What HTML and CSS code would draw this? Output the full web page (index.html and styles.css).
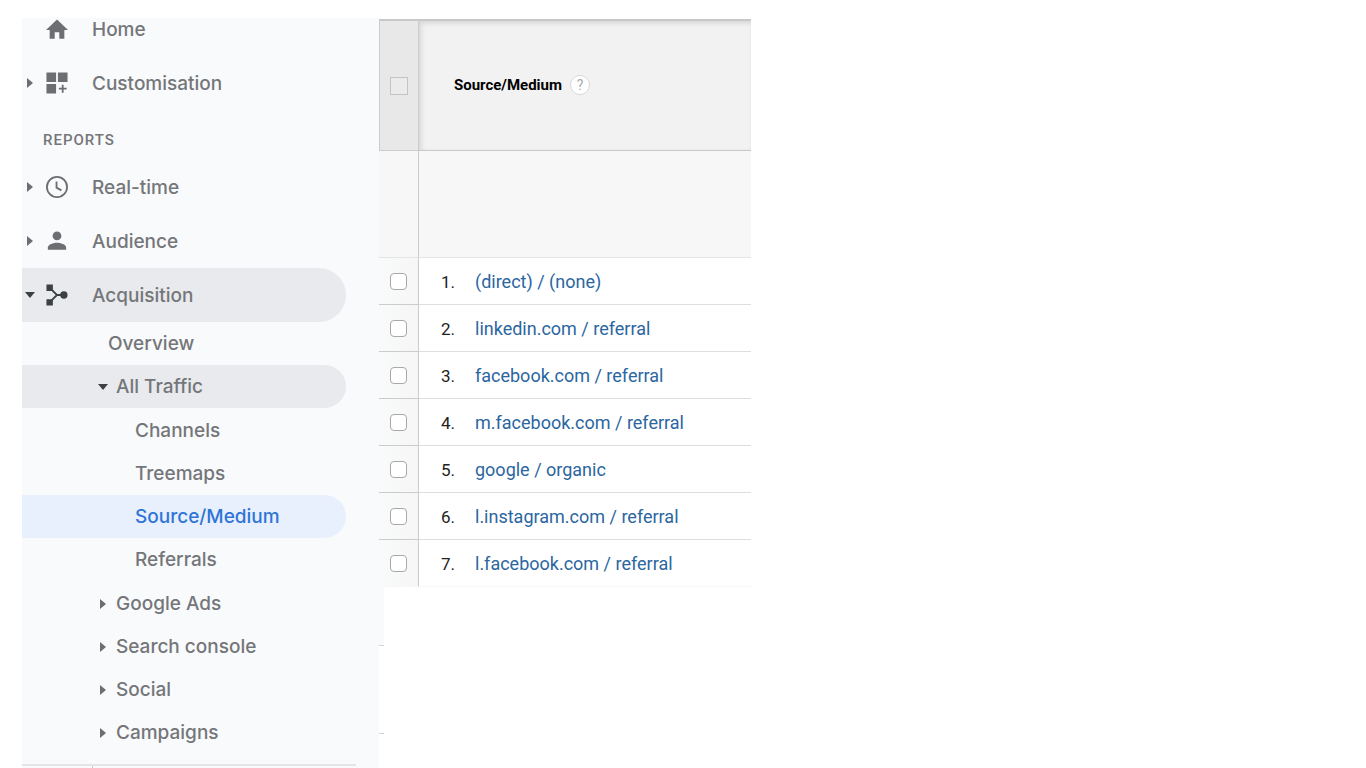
FILE: index.html
```
<!DOCTYPE html>
<html lang="en">
<head>
  <meta charset="UTF-8">
  <meta name="viewport" content="width=device-width, initial-scale=1.0">
  <title>Source/Medium</title>
  <link rel="stylesheet" href="styles.css">
</head>
<body>
  <div class="page">
    <aside class="sidebar">
      <nav>
        <ul class="nav">
          <li><a class="item" href="#"><span class="arrow"></span>
            <svg class="icon" viewBox="0 0 24 24"><path d="M9.500 22.500v-7h5v7h5.500V13h4L12 1.500 0 13h4v9.500z"/></svg>Home</a></li>
          <li><a class="item" href="#"><span class="arrow right"></span>
            <svg class="icon" viewBox="0 0 24 24"><path d="M.5.5h10.500v10.500H.5zM13 .5h10.500v10.500H13zM.5 13h10.500v10.500H.5zM17.200 14h2v3.200h3.300v2h-3.300v3.300h-2v-3.300H14v-2h3.200z"/></svg>Customisation</a></li>
        </ul>
        <h2 class="heading">REPORTS</h2>
        <ul class="nav">
          <li><a class="item" href="#"><span class="arrow right"></span>
            <svg class="icon" viewBox="0 0 24 24"><circle class="line" cx="12" cy="12" r="11"/><path class="line" d="M11.500 6v6.700l5.300 3"/></svg>Real-time</a></li>
          <li><a class="item" href="#"><span class="arrow right"></span>
            <svg class="icon" viewBox="0 0 24 24"><circle cx="12" cy="6.500" r="4.800"/><path d="M2 21.500v-2.500c0-3.500 6.500-5.200 10-5.200s10 1.700 10 5.200v2.500z"/></svg>Audience</a></li>
          <li><a class="item open" href="#"><span class="arrow down"></span>
            <svg class="icon dark" viewBox="0 0 24 24"><path d="M.5.5h7V7.500h-7zM.5 16.500h7v7h-7z"/><circle cx="19.500" cy="12" r="4"/><path class="line" d="M4.500 4.500l7.500 7.500-7.500 7.500M12 12h7"/></svg>Acquisition</a>
            <ul class="sub">
              <li><a class="item overview" href="#">Overview</a></li>
              <li><a class="item group open" href="#"><span class="arrow down"></span>All Traffic</a>
                <ul class="leaves">
                  <li><a class="item" href="#">Channels</a></li>
                  <li><a class="item" href="#">Treemaps</a></li>
                  <li><a class="item active" href="#">Source/Medium</a></li>
                  <li><a class="item" href="#">Referrals</a></li>
                </ul>
              </li>
              <li><a class="item group" href="#"><span class="arrow right"></span>Google Ads</a></li>
              <li><a class="item group" href="#"><span class="arrow right"></span>Search console</a></li>
              <li><a class="item group" href="#"><span class="arrow right"></span>Social</a></li>
              <li><a class="item group" href="#"><span class="arrow right"></span>Campaigns</a></li>
            </ul>
          </li>
        </ul>
      </nav>
      <div class="bottom-bar"><div class="bottom-cell"></div></div>
    </aside>

    <main class="report">
      <table class="table">
        <thead>
          <tr>
            <th class="check"><input class="box square" type="checkbox" aria-label="Select all rows"></th>
            <th class="title"><div class="title-row">Source/Medium <button class="help" type="button">?</button></div></th>
          </tr>
        </thead>
        <tbody>
          <tr class="totals"><td class="check"></td><td></td></tr>
          <tr><td class="check"><input class="box" type="checkbox" aria-label="Row 1"></td><td><span class="num">1.</span><a href="#">(direct) / (none)</a></td></tr>
          <tr><td class="check"><input class="box" type="checkbox" aria-label="Row 2"></td><td><span class="num">2.</span><a href="#">linkedin.com / referral</a></td></tr>
          <tr><td class="check"><input class="box" type="checkbox" aria-label="Row 3"></td><td><span class="num">3.</span><a href="#">facebook.com / referral</a></td></tr>
          <tr><td class="check"><input class="box" type="checkbox" aria-label="Row 4"></td><td><span class="num">4.</span><a href="#">m.facebook.com / referral</a></td></tr>
          <tr><td class="check"><input class="box" type="checkbox" aria-label="Row 5"></td><td><span class="num">5.</span><a href="#">google / organic</a></td></tr>
          <tr><td class="check"><input class="box" type="checkbox" aria-label="Row 6"></td><td><span class="num">6.</span><a href="#">l.instagram.com / referral</a></td></tr>
          <tr><td class="check"><input class="box" type="checkbox" aria-label="Row 7"></td><td><span class="num">7.</span><a href="#">l.facebook.com / referral</a></td></tr>
        </tbody>
      </table>
      <div class="edge filled"></div>
      <div class="edge tall"></div>
    </main>
  </div>
</body>
</html>
```
FILE: styles.css
```
* {
  box-sizing: border-box;
}

body {
  margin: 0;
  background: #fff;
  font-family: Roboto, "Liberation Sans", sans-serif;
}

.page {
  display: flex;
  height: 100vh;
  padding: 18px 0 0 22px;
  overflow: hidden;
}

ul {
  list-style: none;
  margin: 0;
  padding: 0;
}

a {
  color: #2b66a0;
  text-decoration: none;
}

/* sidebar */
.sidebar {
  flex: 0 0 357px;
  overflow: hidden;
  background: #f9fafc;
  font-family: Inter, sans-serif;
}

nav {
  margin-top: -16px;
}

.item {
  display: flex;
  align-items: center;
  height: 54px;
  margin-right: 33px;
  border-radius: 0 27px 27px 0;
  color: #747679;
  font-size: 19px;
  font-weight: 500;
}

.open {
  background: #e8eaed;
}

.arrow {
  display: flex;
  justify-content: center;
  width: 16px;
  margin-right: 8px;
}

.arrow::before {
  content: "";
  border: 0 solid transparent;
}

.right::before {
  border-width: 5px 0 5px 6px;
  border-left-color: #6c6e71;
}

.down::before {
  border-width: 6px 5px 0;
  border-top-color: #3c4043;
}

.icon {
  width: 22px;
  height: 22px;
  margin-right: 24px;
  fill: #6c6e71;
  stroke: #6c6e71;
  stroke-width: 0;
}

.icon .line {
  fill: none;
  stroke-width: 2;
}

.dark {
  fill: #3c4043;
  stroke: #3c4043;
}

.heading {
  margin: 0;
  padding: 21px 0 11px 21px;
  color: #747679;
  font-family: Roboto, sans-serif;
  font-size: 15px;
  font-weight: 500;
  line-height: 18px;
  letter-spacing: 1px;
}

.sub {
  padding-bottom: 10px;
}

.sub .item {
  height: 43px;
}

.overview {
  padding-left: 86px;
}

.group {
  padding-left: 73px;
}

.group .arrow {
  margin-right: 5px;
}

.leaves {
  padding: 1px 0;
}

.leaves .item {
  padding-left: 113px;
}

.leaves .active {
  background: #e8f0fe;
  color: #2f75d6;
}

.bottom-bar {
  margin-right: 23px;
  border-top: 2px solid #e4e5e7;
}

.bottom-cell {
  width: 71px;
  height: 10px;
  border-right: 1px solid #c9cacc;
}

/* report */
.report {
  flex: 0 1 372px;
  padding-top: 1px;
}

.table {
  width: 100%;
  border-collapse: separate;
  border-spacing: 0;
  font-size: 17px;
}

th,
td {
  height: 47px;
  padding: 0 0 0 22px;
  border-bottom: 1px solid #dedede;
  text-align: left;
}

td a {
  font-size: 18px;
}

.check {
  width: 40px;
  padding: 0;
  border-right: 1px solid #ccc;
  border-bottom-color: #ccc;
  background: linear-gradient(to right, #f9fafb, #f6f6f6);
  text-align: center;
}

th {
  height: 132px;
  border-top: 2px solid #c8c8c8;
  border-bottom-color: #c8c8c8;
  background: #f2f2f2;
  font-size: 15px;
}

th.check {
  border-left: 1px solid #ccc;
  background: #e8e8e8;
}

.title {
  padding: 0 0 2px 35px;
  box-shadow: inset 2px 2px 5px #d4d4d4;
}

.title-row {
  display: flex;
  align-items: center;
  gap: 8px;
}

.help {
  width: 20px;
  height: 20px;
  padding: 0;
  border: 1px solid #d8d8d8;
  border-radius: 50%;
  background: #fff;
  color: #aaa;
  font: 14px Roboto, sans-serif;
}

.totals td {
  height: 107px;
  border-bottom-color: #e4e4e4;
  background: #f7f7f7;
}

tbody tr:last-child td {
  border-bottom-color: #f7f7f7;
}

.box {
  appearance: none;
  display: block;
  width: 17px;
  height: 17px;
  margin: 0 auto;
  border: 1px solid #a8a8a8;
  border-radius: 4px;
  background: #fff;
}

.square {
  width: 18px;
  height: 18px;
  border-color: #c4c4c4;
  border-radius: 0;
  background: #ebebeb;
}

.num {
  display: inline-block;
  width: 34px;
  color: #222;
}

.edge {
  width: 5px;
  height: 88px;
  border-bottom: 1px solid #d4d4d4;
}

.filled {
  height: 59px;
  background: #f9fafb;
}
```
